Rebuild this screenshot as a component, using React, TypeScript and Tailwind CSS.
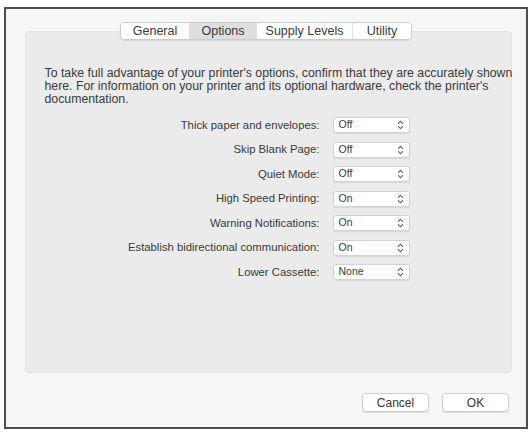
import React from "react";

const rows: [string, string][] = [
  ["Thick paper and envelopes:", "Off"],
  ["Skip Blank Page:", "Off"],
  ["Quiet Mode:", "Off"],
  ["High Speed Printing:", "On"],
  ["Warning Notifications:", "On"],
  ["Establish bidirectional communication:", "On"],
  ["Lower Cassette:", "None"],
];

const tabs = [
  { label: "General", w: "w-[68px]", active: false },
  { label: "Options", w: "w-[67px]", active: true },
  { label: "Supply Levels", w: "w-[96px]", active: false },
  { label: "Utility", w: "w-[59px]", active: false },
];

function Chevrons() {
  return (
    <svg width="7" height="10" viewBox="0 0 7 10" className="shrink-0">
      <path d="M1 3.8 L3.5 1.3 L6 3.8" fill="none" stroke="#666" strokeWidth="1.1" />
      <path d="M1 6.2 L3.5 8.7 L6 6.2" fill="none" stroke="#666" strokeWidth="1.1" />
    </svg>
  );
}

export default function App() {
  return (
    <div
      className="w-[531px] h-[434px] bg-white pt-[7px] pl-[4px]"
      style={{ fontFamily: '"Liberation Sans", Arial, sans-serif' }}
    >
      <div className="w-[524px] h-[422px] border-2 border-[#4d4d4d] bg-[#f6f6f6] flex flex-col">
        <div className="flex flex-col items-center pt-[13px]">
          <div className="relative z-10 flex h-[18px] rounded-[4px] border border-[#cbcbcb] bg-white shadow-[0_1px_1px_rgba(0,0,0,0.08)] overflow-hidden">
            {tabs.map((t, i) => (
              <div
                key={t.label}
                className={`${t.w} flex items-center justify-center text-[12.5px] text-[#3a3a3a] ${
                  t.active ? "bg-[#dedede]" : "bg-white"
                } ${i > 0 ? "border-l border-[#e2e2e2]" : ""}`}
              >
                {t.label}
              </div>
            ))}
          </div>
          <div className="-mt-[9px] ml-[4px] w-[487px] h-[342px] rounded-[4px] border border-[#e2e2e2] bg-[#ebebeb] pt-[35px] pl-[19px]">
            <p className="text-[12.3px] leading-[13px] text-[#3a3a3a] whitespace-nowrap">
              To take full advantage of your printer's options, confirm that they are accurately shown
              <br />
              here. For information on your printer and its optional hardware, check the printer's
              <br />
              documentation.
            </p>
            <div className="mt-[11px] -ml-[19px] flex flex-col gap-[8.5px]">
              {rows.map(([label, value]) => (
                <div key={label} className="flex items-center h-[16px]">
                  <div className="w-[294px] text-right text-[11.3px] text-[#3a3a3a] whitespace-nowrap">
                    {label}
                  </div>
                  <div className="ml-[13px] w-[77px] h-[16px] flex items-center justify-between rounded-[3px] border border-[#d2d2d2] bg-white pl-[5px] pr-[5px] shadow-[0_1px_1px_rgba(0,0,0,0.08)]">
                    <span className="text-[10.5px] text-[#3a3a3a]">{value}</span>
                    <Chevrons />
                  </div>
                </div>
              ))}
            </div>
          </div>
        </div>
        <div className="flex justify-end gap-[13px] pr-[17px] mt-[20px]">
          <button className="w-[67px] h-[19px] rounded-[4px] border border-[#cfcfcf] bg-white text-[12px] text-[#333] shadow-[0_1px_1px_rgba(0,0,0,0.1)]">
            Cancel
          </button>
          <button className="w-[67px] h-[19px] rounded-[4px] border border-[#cfcfcf] bg-white text-[12px] text-[#333] shadow-[0_1px_1px_rgba(0,0,0,0.1)]">
            OK
          </button>
        </div>
      </div>
    </div>
  );
}
